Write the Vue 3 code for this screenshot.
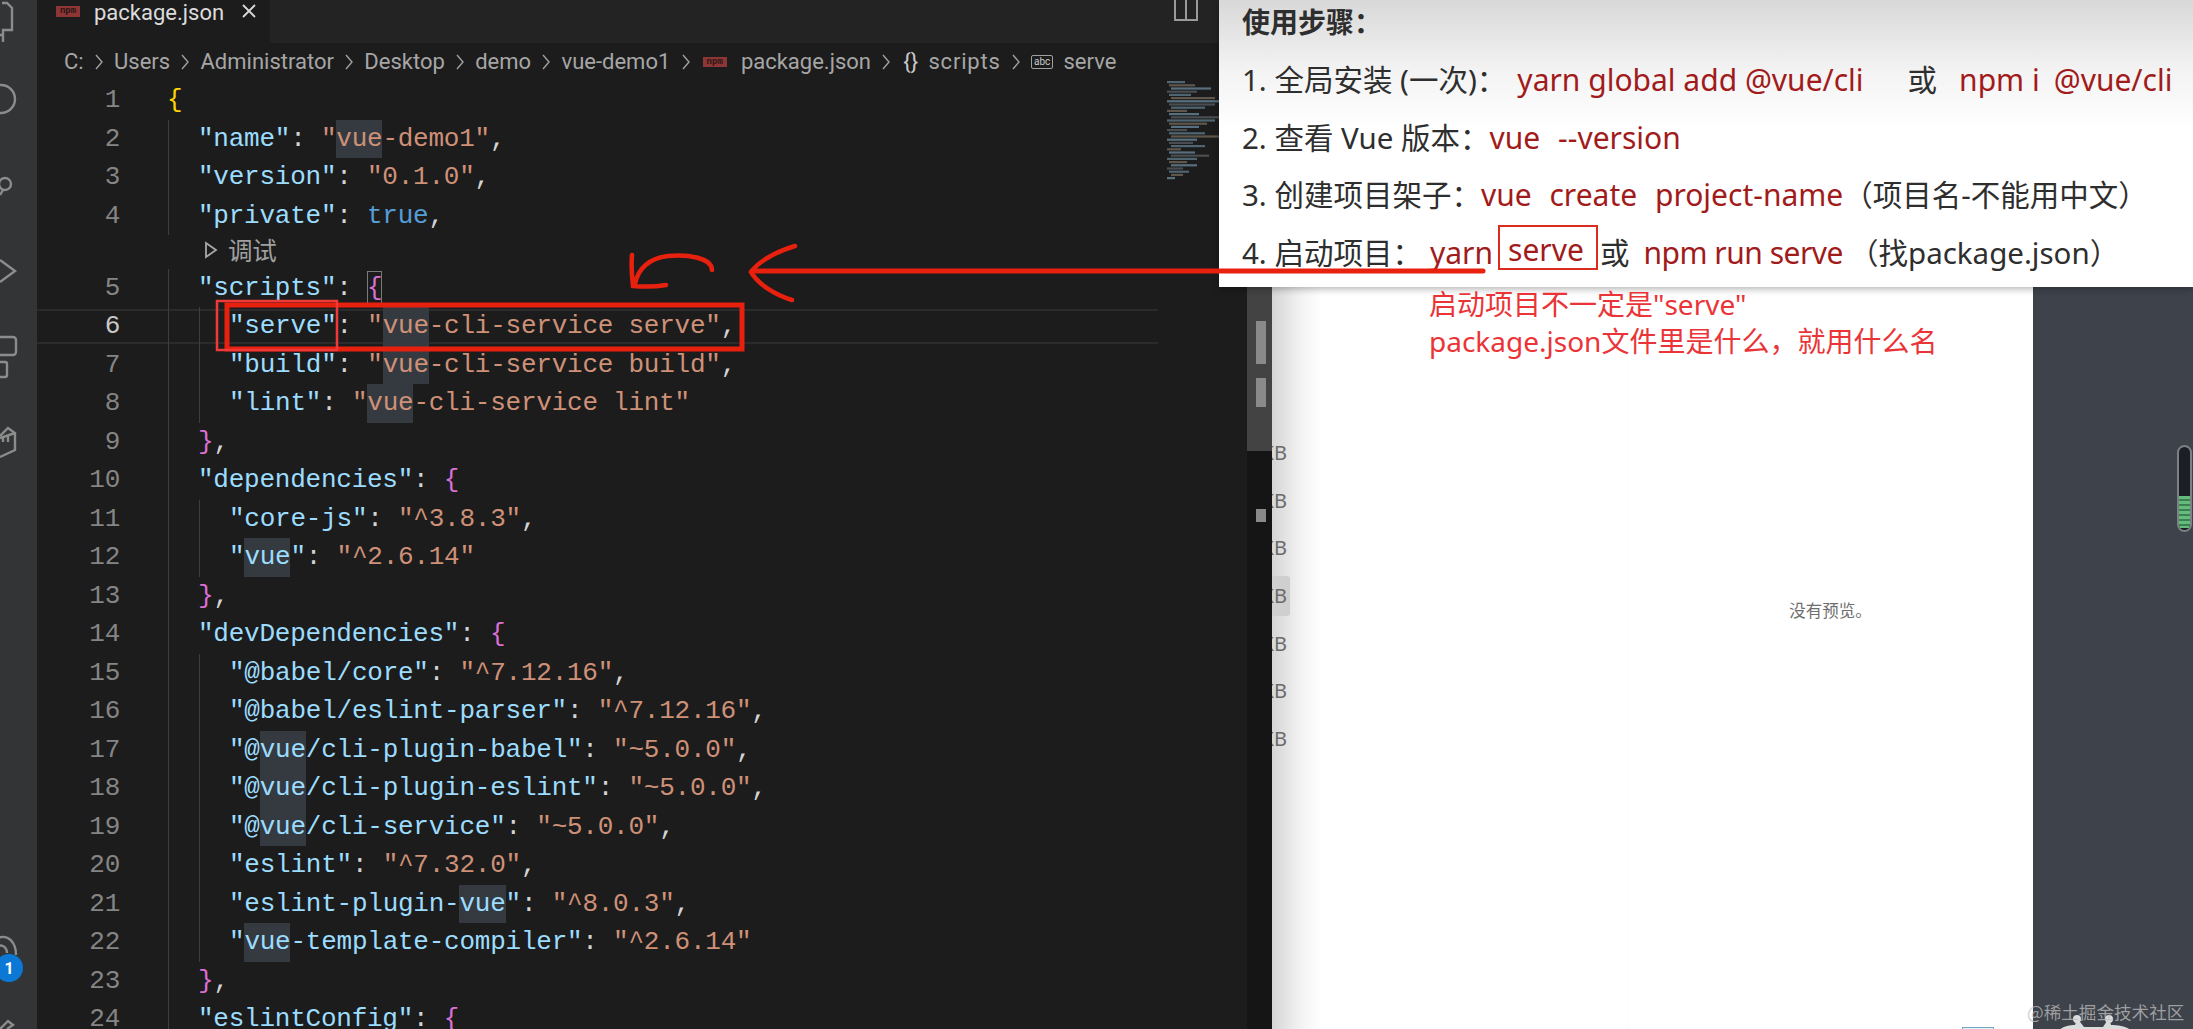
<script setup>
const raw = [
  [1, 0, [['y', '{']]],
  [2, 1, [['k', '"name"'], ['p', ': '], ['s', '"vue-demo1"'], ['p', ',']]],
  [3, 1, [['k', '"version"'], ['p', ': '], ['s', '"0.1.0"'], ['p', ',']]],
  [4, 1, [['k', '"private"'], ['p', ': '], ['b', 'true'], ['p', ',']]],
  [5, 1, [['k', '"scripts"'], ['p', ': '], ['m box', '{']]],
  [6, 2, [['k', '"serve"'], ['p', ': '], ['s', '"vue-cli-service serve"'], ['p', ',']]],
  [7, 2, [['k', '"build"'], ['p', ': '], ['s', '"vue-cli-service build"'], ['p', ',']]],
  [8, 2, [['k', '"lint"'], ['p', ': '], ['s', '"vue-cli-service lint"']]],
  [9, 1, [['m', '}'], ['p', ',']]],
  [10, 1, [['k', '"dependencies"'], ['p', ': '], ['m', '{']]],
  [11, 2, [['k', '"core-js"'], ['p', ': '], ['s', '"^3.8.3"'], ['p', ',']]],
  [12, 2, [['k', '"vue"'], ['p', ': '], ['s', '"^2.6.14"']]],
  [13, 1, [['m', '}'], ['p', ',']]],
  [14, 1, [['k', '"devDependencies"'], ['p', ': '], ['m', '{']]],
  [15, 2, [['k', '"@babel/core"'], ['p', ': '], ['s', '"^7.12.16"'], ['p', ',']]],
  [16, 2, [['k', '"@babel/eslint-parser"'], ['p', ': '], ['s', '"^7.12.16"'], ['p', ',']]],
  [17, 2, [['k', '"@vue/cli-plugin-babel"'], ['p', ': '], ['s', '"~5.0.0"'], ['p', ',']]],
  [18, 2, [['k', '"@vue/cli-plugin-eslint"'], ['p', ': '], ['s', '"~5.0.0"'], ['p', ',']]],
  [19, 2, [['k', '"@vue/cli-service"'], ['p', ': '], ['s', '"~5.0.0"'], ['p', ',']]],
  [20, 2, [['k', '"eslint"'], ['p', ': '], ['s', '"^7.32.0"'], ['p', ',']]],
  [21, 2, [['k', '"eslint-plugin-vue"'], ['p', ': '], ['s', '"^8.0.3"'], ['p', ',']]],
  [22, 2, [['k', '"vue-template-compiler"'], ['p', ': '], ['s', '"^2.6.14"']]],
  [23, 1, [['m', '}'], ['p', ',']]],
  [24, 1, [['k', '"eslintConfig"'], ['p', ': '], ['m', '{']]],
]

const lines = raw.map(([n, depth, tokens]) => ({
  n,
  depth,
  lens: n === 5,
  active: n === 6,
  tokens: tokens.flatMap(([c, t]) =>
    t.split(/(vue)/).filter(Boolean).map((text) => ({ c: text === 'vue' ? c + ' hl' : c, text }))
  ),
}))

const crumbs = ['C:', 'Users', 'Administrator', 'Desktop', 'demo', 'vue-demo1']
const kbRows = [0, 1, 2, 3, 4, 5, 6]

const mini = []
const widths = [18, 26, 40, 30, 22, 44, 52, 46, 34, 20, 30, 52, 48, 38, 28, 20, 36, 52, 30, 24, 34, 14, 26, 38, 30, 18, 26, 16, 20, 12, 8]
widths.forEach((w, i) => {
  mini.push({ y: i * 3.2, x: (i % 3) * 2, w, c: i % 4 === 0 ? '#4f6572' : i % 4 === 1 ? '#5f564c' : i % 4 === 2 ? '#56707f' : '#4a4e52' })
})
</script>

<template>
  <div class="screen">
    <div class="activity">
      <svg width="37" height="1029" viewBox="0 0 37 1029" fill="none" stroke="#8c8c8c" stroke-width="2.4">
        <path d="M2 3H7L12 8V30H3V42M0 35H2" />
        <circle cx="1" cy="99" r="14" />
        <circle cx="5" cy="184" r="6" />
        <path d="M0 195L3 190" />
        <path d="M0 260L15 271L0 282" />
        <rect x="-6" y="337" width="22" height="18" rx="3" />
        <rect x="-8" y="362" width="15" height="15" rx="2" />
        <path d="M0 436L8 428L15 433V450L0 457M0 438L15 433M3 437V442M8 436V442" />
        <path d="M-2 938C8 934 16 942 16 955" />
        <path d="M-2 946C3 944 7 948 7 953" />
        <path d="M0 1029L8 1021L13 1025L7 1029" />
        <circle cx="9" cy="968" r="14" fill="#0a78d4" stroke="none" />
        <text x="9" y="974" fill="#fff" stroke="none" font-family="Roboto, sans-serif" font-size="16" font-weight="700" text-anchor="middle">1</text>
      </svg>
    </div>

    <div class="editor">
      <div class="tabs">
        <div class="tab">
          <span class="npm">npm</span>
          <span class="tab-name">package.json</span>
          <svg class="tab-close" width="16" height="16" viewBox="0 0 16 16" fill="none" stroke="#d8d8d8" stroke-width="1.8"><path d="M2 2L14 14M14 2L2 14" /></svg>
        </div>
        <svg class="split" width="24" height="21" viewBox="0 0 24 21" fill="none" stroke="#9a9a9a" stroke-width="2"><path d="M1 -2V20H23V-2M12 -2V20" /></svg>
      </div>

      <div class="crumbs">
        <template v-for="c in crumbs" :key="c">
          <span>{{ c }}</span>
          <svg class="chev" width="10" height="20" viewBox="0 0 10 20" fill="none" stroke="#a0a0a0" stroke-width="1.4"><path d="M2 3L8 10L2 17" /></svg>
        </template>
        <span class="npm small">npm</span>
        <span>package.json</span>
        <svg class="chev" width="10" height="20" viewBox="0 0 10 20" fill="none" stroke="#a0a0a0" stroke-width="1.4"><path d="M2 3L8 10L2 17" /></svg>
        <span class="brace-ico">{}</span>
        <span class="scripts-word">scripts</span>
        <svg class="chev" width="10" height="20" viewBox="0 0 10 20" fill="none" stroke="#a0a0a0" stroke-width="1.4"><path d="M2 3L8 10L2 17" /></svg>
        <span class="abc">abc</span>
        <span>serve</span>
      </div>

      <div class="body">
        <div class="code">
          <template v-for="l in lines" :key="l.n">
            <div v-if="l.lens" class="lens">
              <svg width="14" height="18" viewBox="0 0 14 18" fill="none" stroke="#a8a8a8" stroke-width="1.8"><path d="M2 2L12 9L2 16Z" /></svg>
              <span>调试</span>
            </div>
            <div class="line" :class="{ active: l.active }">
              <span class="num">{{ l.n }}</span>
              <span class="text" :style="{ paddingLeft: l.depth * 31 + 'px' }">
                <i v-for="g in l.depth" :key="g" class="guide" :style="{ left: (g - 1) * 31 + 1 + 'px' }"></i><span v-for="(t, i) in l.tokens" :key="i" :class="t.c">{{ t.text }}</span>
              </span>
            </div>
          </template>
        </div>
        <svg class="minimap" width="52" height="104" viewBox="0 0 52 104">
          <rect v-for="(r, i) in mini" :key="i" :x="r.x" :y="r.y" :width="r.w" height="2.2" :fill="r.c" />
        </svg>
      </div>
    </div>

    <div class="scrollbar">
      <div class="slider">
        <div class="mark tall"></div>
        <div class="mark mid"></div>
      </div>
      <div class="mark low"></div>
    </div>

    <div class="files">
      <div class="kb-pane">
        <div v-for="k in kbRows" :key="k" class="kb" :class="{ sel: k === 3 }"><span>KB</span></div>
      </div>
      <div class="preview">没有预览。</div>
      <div class="blue-box"></div>
    </div>

    <div class="dark">
      <div class="meter"><div class="meter-fill"></div></div>
      <svg class="mascot" width="76" height="16" viewBox="0 0 76 16" fill="#d9dbdd"><circle cx="20" cy="4" r="4" /><circle cx="52" cy="4" r="4" /><path d="M20 3L27 12H46L52 3L54 10C62 10 72 12 74 16H2C4 12 12 10 18 10Z" /></svg>
    </div>

    <div class="steps">
      <div class="title">使用步骤：</div>
      <div class="row">1. 全局安装 (一次)：<span class="cmd gap-a">yarn global add @vue/cli</span><span class="gap-b">或</span><span class="cmd gap-b2">npm i</span><span class="cmd gap-c">@vue/cli</span></div>
      <div class="row">2. 查看 Vue 版本：<span class="cmd wide">vue --version</span></div>
      <div class="row">3. 创建项目架子：<span class="cmd wide">vue create project-name</span>（项目名-不能用中文）</div>
      <div class="row">4. 启动项目：<span class="cmd gap-d">yarn</span><span class="cmd boxed">serve</span><span class="gap-e">或</span><span class="cmd gap-f tight">npm run serve</span><span class="gap-g">（找package.json）</span></div>
    </div>

    <div class="note">启动项目不一定是"serve"<br />package.json文件里是什么，就用什么名</div>

    <svg class="ink" width="2193" height="1029" viewBox="0 0 2193 1029" fill="none">
      <rect x="227" y="305" width="515" height="44" stroke="#e8210f" stroke-width="5" />
      <rect x="217" y="301" width="120" height="49" stroke="#f03a3a" stroke-width="2.5" />
      <path d="M1483 271H752" stroke="#e8210f" stroke-width="5" stroke-linecap="round" />
      <path d="M795 246C775 252 758 262 751 272C758 284 775 295 792 300" stroke="#e8210f" stroke-width="4.5" stroke-linecap="round" />
      <path d="M712 270C712 258 688 254 668 256C650 258 638 268 635 284M632 255C631 268 632 278 633 286C645 287 655 287 666 285" stroke="#e8210f" stroke-width="4.5" stroke-linecap="round" />
    </svg>

    <div class="watermark">@稀土掘金技术社区</div>
  </div>
</template>

<style>
html, body { margin: 0; background: #1e1e1e; }
</style>

<style scoped>
.screen {
  position: relative;
  display: flex;
  width: 2193px;
  height: 1029px;
  overflow: hidden;
  background: #1e1e1e;
  font-family: "Noto Sans", "Noto Sans CJK SC", sans-serif;
}
.activity { flex: 0 0 37px; background: #333435; height: 100%; }
.activity svg { display: block; }

.editor { flex: 0 0 1210px; display: flex; flex-direction: column; background: #1c1c1c; min-width: 0; }
.tabs { display: flex; height: 43px; background: #232323; flex: none; }
.tab { width: 233px; display: flex; align-items: flex-start; background: #1c1c1c; padding-left: 19px; box-sizing: border-box; }
.npm {
  width: 24px; height: 11px; margin-top: 6px; background: #8e3535; color: #2a1515;
  font: 700 9px/11px "Liberation Mono", monospace; text-align: center; overflow: hidden; flex: none;
}
.tab-name { margin-left: 14px; color: #dcdcdc; font: 22px/25px Roboto, sans-serif; }
.tab-close { margin-left: 17px; margin-top: 3px; }
.split { margin-left: auto; margin-right: 49px; }

.crumbs {
  height: 38px; flex: none; display: flex; align-items: center; gap: 10.2px; padding-left: 27px;
  color: #a6a6a6; font: 22px/38px Roboto, sans-serif;
}
.chev { flex: none; }
.npm.small { margin: 0 4px 0 2px; background: #8e3535; height: 10px; line-height: 10px; }
.brace-ico { color: #c8c8c8; margin-left: 2px; }
.scripts-word { letter-spacing: 0.8px; }
.abc { border: 1px solid #a0a0a0; font-size: 10px; line-height: 12px; padding: 0 2px; border-radius: 2px; color: #c8c8c8; }

.body { flex: 1; display: flex; min-height: 0; }
.code { flex: 0 0 1121px; font-family: "Liberation Mono", monospace; font-size: 26px; letter-spacing: -0.24px; }
.line { display: flex; height: 38.5px; line-height: 38.5px; white-space: pre; position: relative; }
.line.active::before {
  content: ""; position: absolute; left: 0; right: 0; top: 2px; bottom: 2px;
  border-top: 2px solid #2b2b2b; border-bottom: 2px solid #2b2b2b; pointer-events: none;
}
.num { flex: 0 0 83px; text-align: right; color: #858585; }
.active .num { color: #c8c8c8; }
.text { position: relative; margin-left: 47px; }
.guide { position: absolute; top: 0; bottom: 0; width: 1px; background: #3e3e3e; }
.lens { height: 33.5px; display: flex; align-items: center; padding: 0 0 4px 167px; gap: 10px; box-sizing: border-box; color: #a0a0a0; font: 24.5px/29px "Noto Sans CJK SC", sans-serif; }

.k { color: #9cdcfe; }
.s { color: #ce9178; }
.b { color: #569cd6; }
.p { color: #d4d4d4; }
.y { color: #ffd700; }
.m { color: #da70d6; }
.hl { display: inline-block; background: #343a40; line-height: 38.5px; }
.box { display: inline-block; line-height: 34px; box-shadow: inset 0 0 0 1px #7a7a7a; }

.minimap { margin-left: 9px; flex: none; filter: blur(0.6px); }

.scrollbar { flex: 0 0 25px; display: flex; flex-direction: column; background: #151515; }
.slider { height: 451px; background: #434343; padding-top: 321px; box-sizing: border-box; flex: none; }
.mark { width: 10px; margin-left: 9px; background: #8a8a8a; }
.tall { height: 43px; }
.mid { height: 29px; margin-top: 14px; }
.low { height: 13px; margin-top: 58px; }

.files { flex: 0 0 761px; display: flex; background: #fff; position: relative; overflow: hidden; }
.kb-pane {
  flex: 0 0 355px; padding-top: 429px; box-sizing: border-box;
  background: linear-gradient(90deg, #d5d5d5 0, #f4f4f4 30px, #fff 50px);
}
.kb { height: 47.7px; width: 18px; overflow: hidden; position: relative; color: #6a6a6a; font: 20px/47.7px "Noto Sans", sans-serif; }
.kb span { position: absolute; right: 3px; white-space: nowrap; }
.kb.sel { background: #cfcfcf; height: 40px; margin: 4px 0 3.7px; line-height: 40px; border-radius: 0 3px 3px 0; }
.preview { flex: 1; border-left: 1px solid #fbfbfb; text-align: center; padding-top: 598px; color: #6e6e6e; font: 16.5px/24px "Noto Sans CJK SC", sans-serif; }
.blue-box { position: absolute; left: 690px; top: 1027px; width: 30px; height: 4px; border: 1px solid #6fa9c4; background: #e8f2f7; }

.dark { flex: 1; background: #3e424b; position: relative; }
.meter {
  position: absolute; top: 445px; right: 1px; width: 15px; height: 87px; box-sizing: border-box;
  border: 2px solid #7d8186; border-radius: 8px; background: #1b1e23; overflow: hidden;
}
.meter-fill {
  position: absolute; left: 0; right: 0; bottom: 2px; height: 32px;
  background: repeating-linear-gradient(180deg, #63bb7c 0 3px, #3d7f53 3px 5px);
}
.mascot { position: absolute; left: 24px; bottom: -2px; }

.steps {
  position: absolute; left: 1219px; top: 0; right: 0; height: 287px;
  padding-left: 23px; box-sizing: border-box;
  background: linear-gradient(180deg, #d8d8d8 0, #f3f3f3 70px, #fff 130px);
  box-shadow: 0 2px 7px rgba(0, 0, 0, 0.3);
  color: #2e2e2e; font-size: 29.5px; white-space: pre;
}
.title { height: 44px; line-height: 44px; margin-bottom: 7px; font-weight: 700; font-size: 28px; }
.row { height: 57.5px; line-height: 57.5px; }
.cmd { color: #a11b1b; font-size: 30px; }
.wide { word-spacing: 10px; }
.tight { letter-spacing: -0.5px; }
.gap-a { margin-left: 11px; }
.gap-b { margin-left: 44px; }
.gap-b2 { margin-left: 22px; }
.gap-c { margin-left: 14px; }
.gap-d { margin-left: 8px; }
.gap-e { margin-left: 2px; }
.gap-f { margin-left: 14px; }
.gap-g { margin-left: 6px; }
.boxed { display: inline-block; margin-left: 5px; width: 100px; height: 45px; line-height: 45px; box-sizing: border-box; border: 2px solid #d92c1e; padding-left: 8px; vertical-align: 3px; }

.note { position: absolute; left: 1429px; top: 286px; color: #ea3438; font-size: 28px; line-height: 37px; white-space: nowrap; }
.ink { position: absolute; left: 0; top: 0; pointer-events: none; }
.watermark { position: absolute; left: 2027px; top: 998px; color: rgba(190, 190, 190, 0.75); font: 17.6px/28px "Noto Sans CJK SC", sans-serif; white-space: nowrap; }
</style>
